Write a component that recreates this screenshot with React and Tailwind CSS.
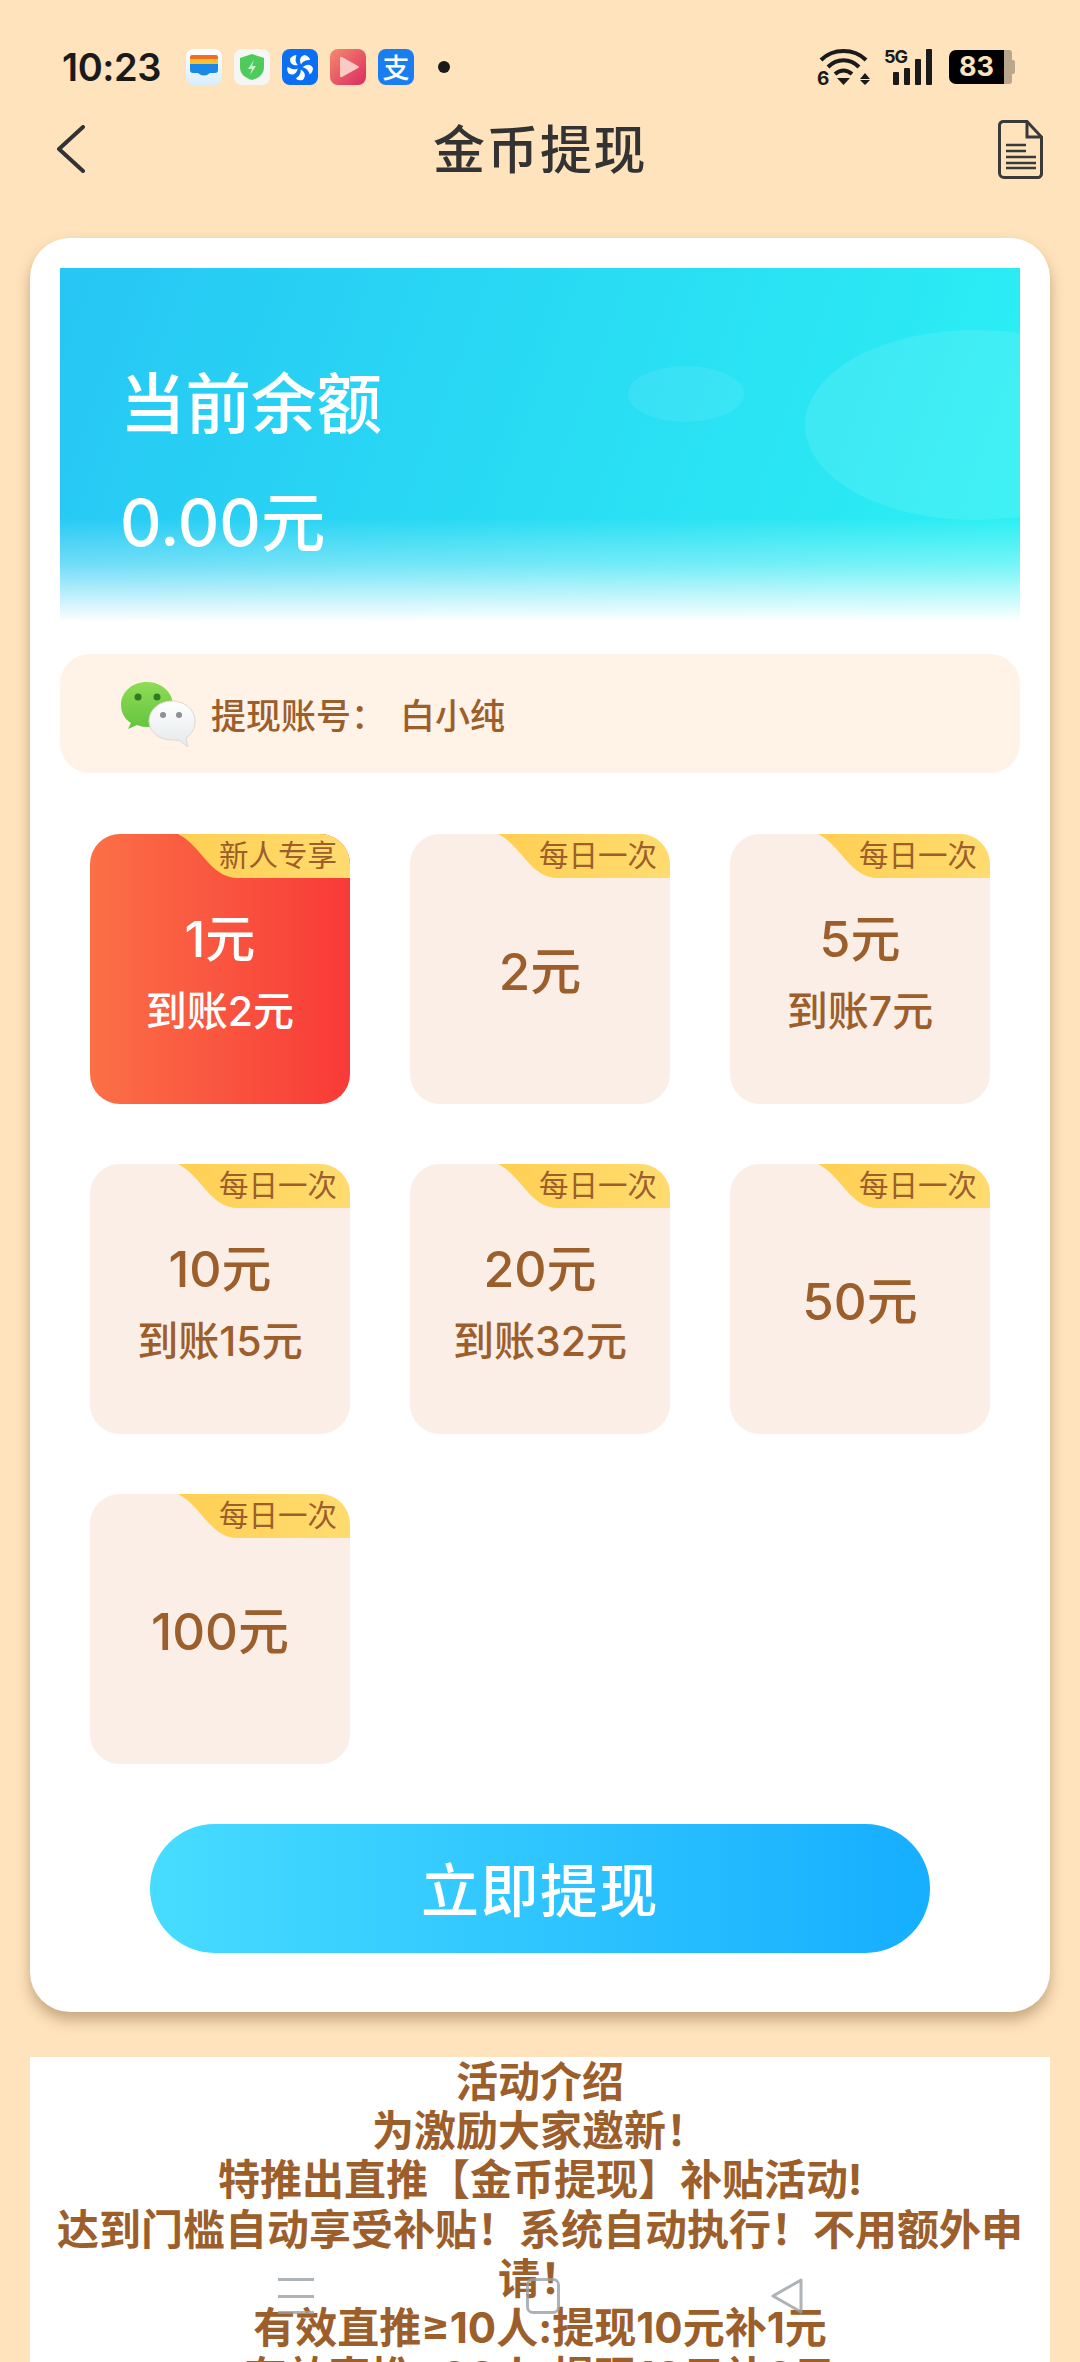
import React from "react";

const CJK = "font-['Inter','Noto_Sans_CJK_SC',sans-serif]";

const tiles = [
  { tag: "新人专享", amount: "1元", sub: "到账2元", active: true },
  { tag: "每日一次", amount: "2元" },
  { tag: "每日一次", amount: "5元", sub: "到账7元" },
  { tag: "每日一次", amount: "10元", sub: "到账15元" },
  { tag: "每日一次", amount: "20元", sub: "到账32元" },
  { tag: "每日一次", amount: "50元" },
  { tag: "每日一次", amount: "100元" },
];

const rules = [
  "活动介绍",
  "为激励大家邀新！",
  "特推出直推【金币提现】补贴活动!",
  "达到门槛自动享受补贴！系统自动执行！不用额外申请！",
  "有效直推≥10人:提现10元补1元",
  "有效直推≥30人:提现10元补2元",
];

function AppIcons() {
  return (
    <div className="ml-[25px] flex items-center gap-[12px]">
      <div className="relative h-[36px] w-[36px] overflow-hidden rounded-[8px] bg-[linear-gradient(to_bottom,#ffffff,#d8eefd)]">
        <svg viewBox="0 0 36 36" className="h-full w-full">
          <rect x="4" y="6" width="28" height="6" rx="2" fill="#f0701f" />
          <rect x="4" y="10" width="28" height="5" fill="#fbc02d" />
          <path d="M4 15h28v6a3 3 0 0 1-3 3h-5q-6 5-12 0H7a3 3 0 0 1-3-3z" fill="#1b87e8" />
        </svg>
      </div>
      <div className="h-[36px] w-[36px] rounded-[8px] bg-[#f6f6f4]">
        <svg viewBox="0 0 36 36" className="h-full w-full">
          <path d="M18 5l12 4v9c0 7-5 11-12 13C11 29 6 25 6 18V9z" fill="#4fcb5d" />
          <path d="M20 11l-6 9h4l-2 6 6-9h-4z" fill="#c9f3cd" />
        </svg>
      </div>
      <div className="h-[36px] w-[36px] rounded-[8px] bg-[#0a6ff2]">
        <svg viewBox="0 0 36 36" className="h-full w-full" fill="#ffffff">
          {[0, 72, 144, 216, 288].map((a) => (
            <path key={a} d="M19 15.500C17 11 18 7 23 6c3 1 5 3 5 5-4 0-7 1-9 4.500z" transform={`rotate(${a} 18 18)`} />
          ))}
        </svg>
      </div>
      <div className="h-[36px] w-[36px] rounded-[8px] bg-[linear-gradient(135deg,#f58a6d,#dc2a62)]">
        <svg viewBox="0 0 36 36" className="h-full w-full">
          <path d="M10 9q0-2 2-1l16 9q2 1 0 2l-16 9q-2 1-2-1z" fill="#fcc9c4" />
        </svg>
      </div>
      <div className="flex h-[36px] w-[36px] items-center justify-center rounded-[8px] bg-[#1a7df0] font-['Noto_Sans_CJK_SC',sans-serif] text-[27px] leading-none font-medium text-white">
        支
      </div>
      <div className="ml-[12px] h-[12px] w-[12px] rounded-full bg-[#1a1a1a]" />
    </div>
  );
}

function StatusRight() {
  return (
    <div className="flex items-center">
      {/* wifi 6 */}
      <svg viewBox="0 0 53 37" className="h-[37px] w-[53px] overflow-visible" fill="none" stroke="#1a1a1a">
        <path d="M4 12C16 0 37 0 49 12" strokeWidth="4" />
        <path d="M11 19C20 10 33 10 42 19" strokeWidth="4" />
        <path d="M18 26q8.500-7 17 0" strokeWidth="4" />
        <path d="M20 30h13l-6.500 7z" fill="#1a1a1a" stroke="none" />
        <path d="M48 25l5 6h-10zM43 32h10l-5 5z" fill="#1a1a1a" stroke="none" />
        <text x="0" y="37" fontSize="19" fontWeight="700" fill="#1a1a1a" stroke="none" fontFamily="Inter">6</text>
      </svg>
      {/* 5g signal */}
      <div className="relative ml-[14px] h-[37px] w-[48px]">
        <span className="absolute top-0 left-0 font-['Inter',sans-serif] text-[18px] leading-[18px] font-bold tracking-[-1px] text-[#1a1a1a]">
          5G
        </span>
        <div className="absolute right-0 bottom-0 flex items-end gap-[5px]">
          <div className="h-[13px] w-[6px] rounded-[1px] bg-[#1a1a1a]" />
          <div className="h-[17px] w-[6px] rounded-[1px] bg-[#1a1a1a]" />
          <div className="h-[26px] w-[6px] rounded-[1px] bg-[#1a1a1a]" />
          <div className="h-[36px] w-[6px] rounded-[1px] bg-[#1a1a1a]" />
        </div>
      </div>
      {/* battery */}
      <div className="ml-[17px] flex items-center">
        <div className="flex h-[34px] w-[55px] items-center justify-center rounded-l-[7px] bg-black font-['Inter',sans-serif] text-[27px] leading-none font-bold text-[#fde3bd]">
          83
        </div>
        <div className="h-[34px] w-[8px] rounded-r-[3px] bg-[#b9a68b]" />
        <div className="h-[14px] w-[3px] rounded-r-[2px] bg-[#b9a68b]" />
      </div>
    </div>
  );
}

function DocIcon() {
  return (
    <svg viewBox="0 0 45 59" className="h-[59px] w-[45px]" fill="none" stroke="#3a3a3a" strokeWidth="3">
      <path d="M5 1.500H29L43.500 17V53a4 4 0 0 1-4 4.500H6A4.500 4.500 0 0 1 1.500 53V5A4 4 0 0 1 5 1.500z" />
      <path d="M29 1.500V17H43.500" />
      <path d="M8 25h20M8 31h20M8 37h30M8 43h30M8 48h30" strokeWidth="2.500" />
    </svg>
  );
}

function WeChatIcon() {
  return (
    <svg viewBox="0 0 76 66" className="h-[66px] w-[76px]">
      <defs>
        <linearGradient id="wxGreen" x1="0" y1="0" x2="0" y2="1">
          <stop offset="0" stopColor="#90dc55" />
          <stop offset="1" stopColor="#62c43e" />
        </linearGradient>
        <linearGradient id="wxWhite" x1="0" y1="0" x2="0" y2="1">
          <stop offset="0" stopColor="#ffffff" />
          <stop offset="1" stopColor="#e4e8ea" />
        </linearGradient>
      </defs>
      <path d="M27 1C12 1 1 11 1 24c0 8 4 14 10 18l-3 6 9-4c3 1 6 2 10 2 15 0 26-10 26-22S42 1 27 1z" fill="url(#wxGreen)" />
      <circle cx="18" cy="16" r="3.500" fill="#2f7a22" />
      <circle cx="37" cy="16" r="3.500" fill="#2f7a22" />
      <path d="M52 20c-13 0-23 9-23 20 0 11 10 19 23 19 3 0 6 0 8 1l8 6-2-9c6-4 9-10 9-17 0-11-10-20-23-20z" fill="url(#wxWhite)" stroke="#ded8d0" strokeWidth="1" />
      <circle cx="43" cy="34" r="3" fill="#8a8f98" />
      <circle cx="59" cy="34" r="3" fill="#8a8f98" />
    </svg>
  );
}

function Tile({ tag, amount, sub, active }) {
  return (
    <div
      className={`relative flex h-[270px] w-[260px] flex-col items-center justify-center overflow-hidden rounded-[30px] ${
        active
          ? "bg-[linear-gradient(to_right,#fb7046,#f83a38)] text-white"
          : "bg-[#faeee7] text-[#9c5e2b]"
      }`}
    >
      <div className="absolute top-0 left-[88px] h-[44px] w-[172px] bg-[linear-gradient(to_right,#ffcf52,#ffdc70)] [clip-path:path('M0_0H172V44H60C32_44_24_12_0_0Z')]" />
      <span className={`absolute top-0 right-[13px] ${CJK} text-[29.500px] leading-[42px] text-[#9c5e2b]`}>
        {tag}
      </span>
      {sub ? (
        <div className="mt-[9px] flex flex-col items-center">
          <span className={`${CJK} text-[50px] leading-[60px] font-medium`}>{amount}</span>
          <span className={`${CJK} mt-[14px] text-[41px] leading-[56px] font-medium`}>{sub}</span>
        </div>
      ) : (
        <span className={`${CJK} mt-[6px] text-[51px] leading-[60px] font-medium`}>{amount}</span>
      )}
    </div>
  );
}

export default function App() {
  return (
    <div className={`relative h-[2362px] w-[1080px] overflow-hidden bg-[#fee3bd] ${CJK}`}>
      <div className="mt-[48px] flex h-[37px] items-center justify-between pr-[65px] pl-[62px]">
        <div className="flex items-center">
          <span className="font-['Inter',sans-serif] text-[38px] leading-none font-semibold tracking-[-0.4px] text-[#1a1a1a]">
            10:23
          </span>
          <AppIcons />
        </div>
        <StatusRight />
      </div>

      <div className="mt-[33px] grid h-[59px] grid-cols-[1fr_auto_1fr] items-center px-[37px]">
        <svg viewBox="0 0 30 48" className="ml-[19px] h-[48px] w-[30px]" fill="none" stroke="#333333" strokeWidth="4" strokeLinecap="round" strokeLinejoin="round">
          <path d="M27 2L3 24L27 46" />
        </svg>
        <h1 className="mt-[3px] text-[52px] leading-[59px] font-medium tracking-[1.500px] text-[#333333]">金币提现</h1>
        <div className="flex justify-end">
          <DocIcon />
        </div>
      </div>

      <div className="mx-[30px] mt-[61px] rounded-[40px] bg-white p-[30px] shadow-[0_8px_14px_rgba(130,95,50,0.45)]">
        <div className="relative h-[354px] overflow-hidden bg-[linear-gradient(110deg,#27c6f4,#2bf1f3)]">
          <div className="absolute top-[98px] left-[568px] h-[56px] w-[116px] rounded-[50%] bg-white/8" />
          <div className="absolute top-[62px] left-[745px] h-[190px] w-[340px] rounded-[50%] bg-white/10" />
          <div className="absolute inset-x-0 bottom-0 h-[104px] bg-[linear-gradient(to_bottom,rgba(255,255,255,0),rgba(255,255,255,0.35)_45%,#ffffff)]" />
          <div className="relative px-[60px] pt-[102px] font-medium text-white">
            <div className="text-[65.500px] leading-[70px]">当前余额</div>
            <div className="mt-[48px] text-[64.500px] leading-[70px]">0.00元</div>
          </div>
        </div>

        <div className="mt-[32px] flex h-[119px] items-center rounded-[30px] bg-[#fff2e7] pl-[60px]">
          <WeChatIcon />
          <span className="mt-[5px] ml-[15px] text-[35px] leading-none font-medium text-[#9c5e2b]">提现账号：</span>
          <span className="mt-[5px] ml-[14px] text-[35px] leading-none font-medium text-[#9c5e2b]">白小纯</span>
        </div>

        <div className="mt-[61px] grid grid-cols-3 gap-[60px] px-[30px]">
          {tiles.map((t) => (
            <Tile key={t.amount} {...t} />
          ))}
        </div>

        <button
          type="button"
          className="mx-auto mt-[60px] mb-[29px] block h-[129px] w-[780px] rounded-full bg-[linear-gradient(to_right,#47dcff,#16aeff)] pt-[4px] text-[58px] leading-none font-medium tracking-[1.500px] text-white"
        >
          立即提现
        </button>
      </div>

      <div className="mx-[30px] mt-[45px] bg-white px-[24px] text-center text-[42px] leading-[49.200px] font-bold text-[#9c5e2b]">
        {rules.map((r) => (
          <p key={r}>{r}</p>
        ))}
      </div>

      {/* system nav overlay */}
      <div className="absolute top-[2278px] left-[278px] flex h-[36px] w-[36px] flex-col justify-between">
        <div className="h-[3px] bg-[#9aa0a6]/80" />
        <div className="h-[3px] bg-[#9aa0a6]/80" />
        <div className="h-[3px] bg-[#9aa0a6]/80" />
      </div>
      <div className="absolute top-[2278px] left-[526px] h-[36px] w-[34px] rounded-[7px] border-[3px] border-[#9aa0a6]/80" />
      <svg viewBox="0 0 34 36" className="absolute top-[2278px] left-[770px] h-[36px] w-[34px]" fill="none" stroke="#9aa0a6" strokeOpacity="0.8" strokeWidth="3" strokeLinejoin="round">
        <path d="M31 2V34L3 18z" />
      </svg>
    </div>
  );
}
